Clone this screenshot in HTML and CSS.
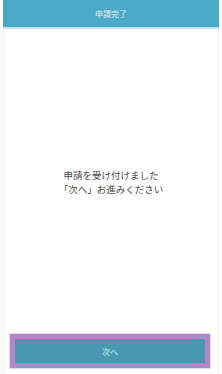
FILE: index.html
```html
<!DOCTYPE html>
<html lang="ja">
<head>
  <meta charset="UTF-8" />
  <meta name="viewport" content="width=device-width, initial-scale=1.0"/>
  <title>申請完了</title>
  <link rel="stylesheet" href="styles.css">
</head>
<body>
  <div class="page">
    <header class="title-bar">申請完了</header>
    <main class="message">
      <p>申請を受け付けました<br>「次へ」お進みください</p>
    </main>
    <footer class="actions">
      <button class="next-btn" type="button">次へ</button>
    </footer>
  </div>
</body>
</html>
```

FILE: styles.css
```css
body {
  margin: 0;
  padding: 0;
  background-color: #fff;
  font-family: 'Noto Sans CJK JP', 'Noto Sans', sans-serif;
}

.page {
  margin: 0 3px;
  height: 374px;
  display: flex;
  flex-direction: column;
  border-left: 1px solid #f0f0f0;
  border-right: 1px solid #f0f0f0;
  box-sizing: border-box;
}

.title-bar {
  height: 27px;
  line-height: 27px;
  background-color: #4ba8c6;
  border-bottom: 2px solid #c4e5ef;
  color: #e8f4f8;
  font-size: 8px;
  text-align: center;
  margin: 0 -1px;
}

.message {
  flex: 1;
  display: flex;
  justify-content: center;
  align-items: center;
}

.message p {
  margin: 0;
  color: #4a4a4a;
  font-size: 9.5px;
  line-height: 14px;
  text-align: center;
}

.actions {
  padding: 0 8px 6px 6px;
}

.next-btn {
  display: block;
  width: 100%;
  height: 34px;
  margin: 0;
  padding: 0;
  background-color: #4699b1;
  border: 5px solid #b584c9;
  outline: 1px solid #e6d6ee;
  color: #d8ecf2;
  font-family: inherit;
  font-size: 8px;
  box-sizing: border-box;
}
```
